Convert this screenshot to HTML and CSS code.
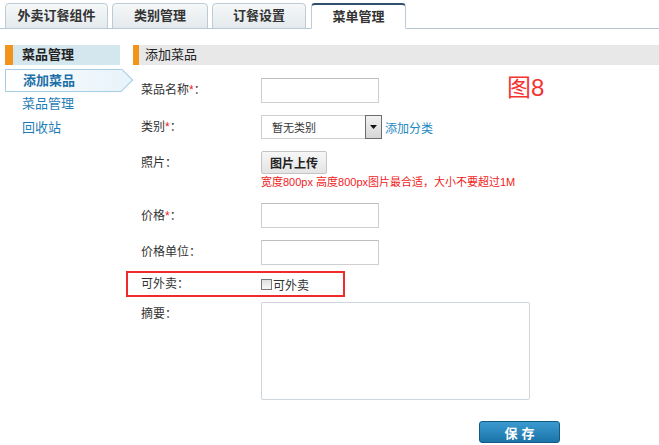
FILE: index.html
```html
<!DOCTYPE html>
<html lang="zh-CN">
<head>
<meta charset="utf-8">
<title>添加菜品</title>
<link rel="stylesheet" href="styles.css">
</head>
<body>
<div class="tabs">
  <div class="tab t1">外卖订餐组件</div>
  <div class="tab t2">类别管理</div>
  <div class="tab t3">订餐设置</div>
  <div class="tab t4 active">菜单管理</div>
</div>
<div class="layout">
  <aside class="side">
    <div class="side-head">菜品管理</div>
    <div class="side-item current">添加菜品</div>
    <div class="side-item">菜品管理</div>
    <div class="side-item">回收站</div>
  </aside>
  <main class="main">
    <div class="main-head">添加菜品</div>
    <div class="figure">图8</div>
    <form class="form">
      <div class="row r-name">
        <label class="lbl">菜品名称<span class="req">*</span>：</label>
        <div class="field"><input class="txt" type="text"></div>
      </div>
      <div class="row r-cat">
        <label class="lbl">类别<span class="req">*</span>：</label>
        <div class="field">
          <div class="select"><span class="sel-text">暂无类别</span><span class="sel-btn"><svg width="7" height="4" viewBox="0 0 7 4"><path d="M0 0H7L3.5 4Z" fill="#111"/></svg></span></div>
          <a class="link">添加分类</a>
        </div>
      </div>
      <div class="row r-photo">
        <label class="lbl">照片：</label>
        <div class="field col">
          <button type="button" class="upload">图片上传</button>
          <div class="hint">宽度800px 高度800px图片最合适，大小不要超过1M</div>
        </div>
      </div>
      <div class="row r-price">
        <label class="lbl">价格<span class="req">*</span>：</label>
        <div class="field"><input class="txt" type="text"></div>
      </div>
      <div class="row r-unit">
        <label class="lbl">价格单位：</label>
        <div class="field"><input class="txt" type="text"></div>
      </div>
      <div class="row r-take boxed">
        <label class="lbl">可外卖：</label>
        <div class="field"><span class="chk"></span><span class="chk-lbl">可外卖</span></div>
      </div>
      <div class="row r-sum">
        <label class="lbl">摘要：</label>
        <div class="field"><textarea class="area"></textarea></div>
      </div>
      <div class="actions"><button type="button" class="save">保存</button></div>
    </form>
  </main>
</div>
</body>
</html>
```
FILE: styles.css
```css
* { box-sizing: border-box; }
html, body { margin: 0; padding: 0; background: #fff; }
body {
  font-family: "Liberation Sans", "Noto Sans CJK SC", sans-serif;
  font-size: 12px;
  color: #333;
  overflow: hidden;
}
.tabs {
  display: flex;
  gap: 4px;
  padding: 3px 0 0 5px;
  border-bottom: 1px solid #b3c6d4;
  height: 29px;
}
.tab {
  height: 26px;
  line-height: 24px;
  text-align: center;
  font-weight: bold;
  font-size: 13px;
  color: #333;
  border: 1px solid #bccbd6;
  border-radius: 4px 4px 0 0;
  background: linear-gradient(#f6f8f9, #e3e9ed);
}
.t1 { width: 103px; }
.t2 { width: 96px; }
.t3 { width: 94px; margin-right: 1px; }
.t4 { width: 95px; }
.tab.active {
  background: #fff;
  border-top: 2px solid #30506e;
  border-bottom-color: #fff;
  line-height: 23px;
}
.layout {
  display: flex;
  padding: 16px 0 0 5px;
}
.side { width: 128px; flex: none; }
.side-head {
  width: 115px;
  height: 20px;
  line-height: 20px;
  background: #d4e6ee;
  border-left: 8px solid #f2931c;
  padding-left: 9px;
  font-weight: bold;
  font-size: 13px;
  color: #222;
}
.side-item {
  height: 24px;
  line-height: 24px;
  padding-left: 17px;
  color: #1f7db5;
  font-size: 13px;
}
.side-item.current {
  position: relative;
  margin-top: 4px;
  height: 23px;
  line-height: 21px;
  width: 117px;
  font-weight: bold;
  color: #1b6fa8;
  border: 1px solid #a9cde2;
  border-right: none;
  background: linear-gradient(90deg, #ffffff, #e8f3fa);
}
.side-item.current::after {
  content: "";
  position: absolute;
  right: -8px;
  top: 2px;
  width: 15px;
  height: 15px;
  transform: rotate(45deg);
  border-top: 1px solid #a9cde2;
  border-right: 1px solid #a9cde2;
  background: #e8f3fa;
}
.main { flex: 1; position: relative; }
.main-head {
  height: 20px;
  line-height: 20px;
  background: #e8e8e8;
  border-left: 6px solid #f2931c;
  padding-left: 6px;
  font-size: 13px;
  color: #222;
}
.figure {
  position: absolute;
  left: 374px;
  top: 30px;
  font-family: "Liberation Sans", "Noto Sans CJK SC", sans-serif;
  font-size: 24px;
  line-height: 26px;
  color: #f53333;
}
.form { padding: 13px 0 0 8px; }
.row {
  display: grid;
  grid-template-columns: 120px 1fr;
  align-items: start;
  margin-bottom: 12px;
}
.lbl { padding-top: 4px; line-height: 16px; font-size: 12px; color: #333; }
.req { color: #e22; }
.field { display: flex; align-items: center; }
.field.col { flex-direction: column; align-items: flex-start; }
.txt {
  width: 118px;
  height: 25px;
  border: 1px solid #cfcfcf;
  border-top-color: #bdbdbd;
  margin: 0;
  padding: 0;
  background: #fff;
}
.select {
  width: 121px;
  height: 24px;
  border: 1px solid #cfcfcf;
  display: flex;
  align-items: center;
  justify-content: space-between;
}
.sel-text { padding-left: 10px; font-size: 11px; color: #333; }
.sel-btn {
  width: 17px;
  height: 24px;
  margin-right: -1px;
  border: 1px solid #6d6d6d;
  background: linear-gradient(#f2f2f2, #d6d6d6);
  display: flex;
  align-items: center;
  justify-content: center;
}
.link { color: #2589c2; font-size: 12px; margin-left: 3px; }
.r-photo { margin-bottom: 14px; }
.upload {
  width: 66px;
  height: 23px;
  margin: 0;
  padding: 0;
  border: 1px solid #c4c4c4;
  border-radius: 2px;
  background: linear-gradient(#f7f7f7, #e4e4e4);
  font-family: "Noto Sans CJK SC", sans-serif;
  font-weight: bold;
  font-size: 12px;
  color: #222;
}
.hint { color: #f01c1c; font-size: 11px; line-height: 14px; margin-top: 1px; }
.r-price .lbl { padding-top: 5px; }
.r-unit { margin-bottom: 6px; }
.boxed {
  margin-left: -15px;
  width: 219px;
  height: 26px;
  border: 2px solid #ef2c2c;
  grid-template-columns: 120px 1fr;
  padding-left: 13px;
  margin-bottom: 5px;
  align-items: center;
}
.boxed .lbl { padding-top: 0; }
.chk {
  width: 11px;
  height: 11px;
  border: 1px solid #7a7a7a;
  background: linear-gradient(#e0e0e0, #f8f8f8);
  margin-right: 1px;
}
.chk-lbl { font-size: 12px; }
.r-sum { margin-bottom: 0; }
.area {
  width: 269px;
  height: 98px;
  border: 1px solid #cfd6dc;
  border-radius: 2px;
  margin: 0;
  resize: none;
}
.actions { padding: 21px 0 0 338px; }
.save {
  width: 81px;
  height: 22px;
  margin: 0;
  padding: 0;
  border: 1px solid #0f5b86;
  border-radius: 3px;
  background: linear-gradient(#3a9ad0, #1c74a8);
  color: #fff;
  font-family: "Noto Sans CJK SC", sans-serif;
  font-weight: bold;
  font-size: 13px;
  letter-spacing: 4px;
  text-indent: 4px;
}
```
